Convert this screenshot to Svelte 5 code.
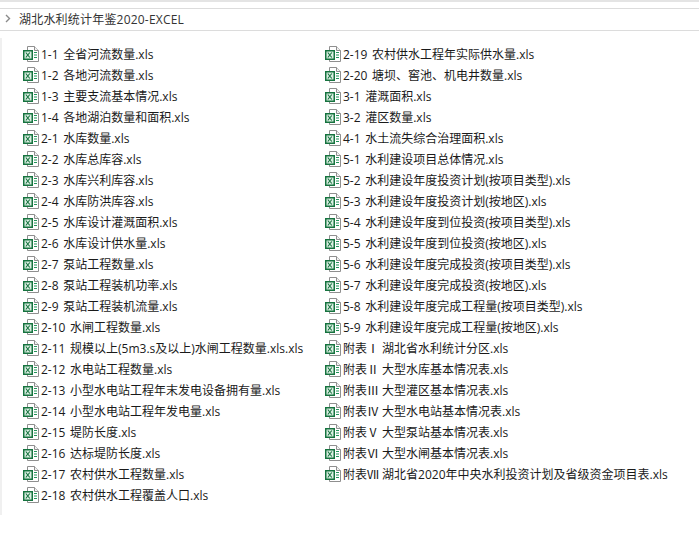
<script lang="ts">
  const col1 = [
    '1-1 全省河流数量.xls', '1-2 各地河流数量.xls', '1-3 主要支流基本情况.xls', '1-4 各地湖泊数量和面积.xls',
    '2-1 水库数量.xls', '2-2 水库总库容.xls', '2-3 水库兴利库容.xls', '2-4 水库防洪库容.xls',
    '2-5 水库设计灌溉面积.xls', '2-6 水库设计供水量.xls', '2-7 泵站工程数量.xls', '2-8 泵站工程装机功率.xls',
    '2-9 泵站工程装机流量.xls', '2-10 水闸工程数量.xls', '2-11 规模以上(5m3.s及以上)水闸工程数量.xls.xls',
    '2-12 水电站工程数量.xls', '2-13 小型水电站工程年末发电设备拥有量.xls', '2-14 小型水电站工程年发电量.xls',
    '2-15 堤防长度.xls', '2-16 达标堤防长度.xls', '2-17 农村供水工程数量.xls', '2-18 农村供水工程覆盖人口.xls'
  ];
  const col2 = [
    '2-19 农村供水工程年实际供水量.xls', '2-20 塘坝、窖池、机电井数量.xls', '3-1 灌溉面积.xls', '3-2 灌区数量.xls',
    '4-1 水土流失综合治理面积.xls', '5-1 水利建设项目总体情况.xls', '5-2 水利建设年度投资计划(按项目类型).xls',
    '5-3 水利建设年度投资计划(按地区).xls', '5-4 水利建设年度到位投资(按项目类型).xls', '5-5 水利建设年度到位投资(按地区).xls',
    '5-6 水利建设年度完成投资(按项目类型).xls', '5-7 水利建设年度完成投资(按地区).xls', '5-8 水利建设年度完成工程量(按项目类型).xls',
    '5-9 水利建设年度完成工程量(按地区).xls', '附表Ⅰ 湖北省水利统计分区.xls', '附表Ⅱ 大型水库基本情况表.xls',
    '附表Ⅲ 大型灌区基本情况表.xls', '附表Ⅳ 大型水电站基本情况表.xls', '附表Ⅴ 大型泵站基本情况表.xls',
    '附表Ⅵ 大型水闸基本情况表.xls', '附表Ⅶ 湖北省2020年中央水利投资计划及省级资金项目表.xls'
  ];
  const columns = [col1, col2];
</script>

{#snippet xlsIcon()}
  <svg class="icon" viewBox="0 0 16 16" width="16" height="16" aria-hidden="true">
    <path d="M4.5 .5H11.5L15.5 4.5V15.5H4.5Z" fill="#fff" stroke="#8f8f8f" />
    <path d="M11.5 .5V4.5H15.5" fill="#f2f2f2" stroke="#8f8f8f" />
    <rect x="0" y="4" width="10" height="10" fill="#16733f" />
    <rect x="1.5" y="5.5" width="7" height="7" fill="#dcefe3" />
    <path d="M2.8 6.5l4 5M6.8 6.5l-4 5" stroke="#16733f" stroke-width="1.1" fill="none" />
    <path d="M11 6.5h3M11 9h3M11 11.5h3" stroke="#23945a" stroke-width="1.2" fill="none" />
  </svg>
{/snippet}

<div class="page">
  <div class="topline"></div>
  <div class="pathbar">
    <svg class="chev" viewBox="0 0 6 9" width="6" height="9" aria-hidden="true">
      <path d="M1 1l3.5 3.5L1 8" fill="none" stroke="#8a8a8a" stroke-width="1.4" />
    </svg>
    <span class="title">湖北水利统计年鉴2020-EXCEL</span>
  </div>
  <div class="list">
    {#each columns as col}
      <div class="col">
        {#each col as name}
          <div class="row" class:appendix={name.startsWith('附表')}>
            {@render xlsIcon()}
            <span class="name">{name}</span>
          </div>
        {/each}
      </div>
    {/each}
  </div>
</div>

<style>
  :global(body) {
    margin: 0;
    background: #fff;
  }

  .page {
    width: 699px;
    height: 538px;
    overflow: hidden;
    font-family: 'Open Sans', 'Noto Sans CJK SC', sans-serif;
    font-size: 12px;
    color: #1a1a1a;
    background: #fff;
  }

  .topline {
    height: 2px;
    margin-bottom: 6px;
    background: #e4e4e4;
  }

  .pathbar {
    display: flex;
    align-items: center;
    gap: 8px;
    height: 23px;
    box-sizing: border-box;
    padding: 0 0 2px 5px;
    border-top: 1px solid #dcdcdc;
    border-bottom: 1px solid #dcdcdc;
    color: #333;
  }

  .title {
    letter-spacing: 0.2px;
  }

  .list {
    display: flex;
    height: 477px;
    margin-top: 7px;
    padding: 5px 0 0 21px;
    border-left: 2px solid #f0f0f0;
    box-sizing: border-box;
  }

  .col {
    width: 302px;
  }

  .row {
    display: flex;
    align-items: center;
    height: 21px;
    gap: 2px;
    white-space: nowrap;
    word-spacing: 1.5px;
  }

  .row.appendix {
    word-spacing: 0;
  }

  .icon {
    flex: none;
  }
</style>
